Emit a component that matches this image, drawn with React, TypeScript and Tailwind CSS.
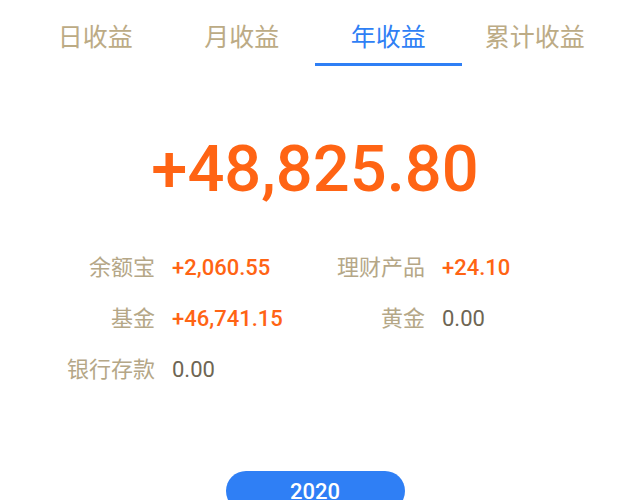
import { useState } from "react";

const tabs = ["日收益", "月收益", "年收益", "累计收益"];

type Item = { label: string; value: string; positive: boolean };

const items: Item[] = [
  { label: "余额宝", value: "+2,060.55", positive: true },
  { label: "理财产品", value: "+24.10", positive: true },
  { label: "基金", value: "+46,741.15", positive: true },
  { label: "黄金", value: "0.00", positive: false },
  { label: "银行存款", value: "0.00", positive: false },
];

export default function App() {
  const [active, setActive] = useState(2);

  return (
    <div
      className="w-[630px] h-[500px] overflow-hidden bg-white flex flex-col"
      style={{ fontFamily: "Roboto, 'Noto Sans CJK SC', sans-serif" }}
    >
      <div className="flex px-[22px] pt-[18px]">
        {tabs.map((t, i) => (
          <button
            key={t}
            onClick={() => setActive(i)}
            className={`flex-1 h-[48px] flex items-start justify-center pt-[4px] text-[25px] leading-[32px] border-b-[3px] ${
              i === active ? "text-[#2f7ff5] border-[#2f7ff5]" : "text-[#bcab85] border-transparent"
            }`}
          >
            {t}
          </button>
        ))}
      </div>

      <div className="mt-[70px] text-center text-[65px] leading-[66px] font-medium text-[#ff6414]">
        +48,825.80
      </div>

      <div className="mt-[40px] ml-[55px] grid grid-cols-[270px_270px]">
        {items.map((it) => (
          <div key={it.label} className="flex items-center h-[51px]">
            <span className="w-[100px] text-right text-[22px] text-[#b5a787]">{it.label}</span>
            <span
              className={`ml-[17px] text-[22px] ${
                it.positive ? "font-medium text-[#ff6414]" : "text-[#6e6553]"
              }`}
            >
              {it.value}
            </span>
          </div>
        ))}
      </div>

      <div className="mt-[76px] flex justify-center">
        <button className="w-[179px] h-[40px] rounded-full bg-[#2f7ff5] text-white text-[22px] font-medium">
          2020
        </button>
      </div>
    </div>
  );
}
